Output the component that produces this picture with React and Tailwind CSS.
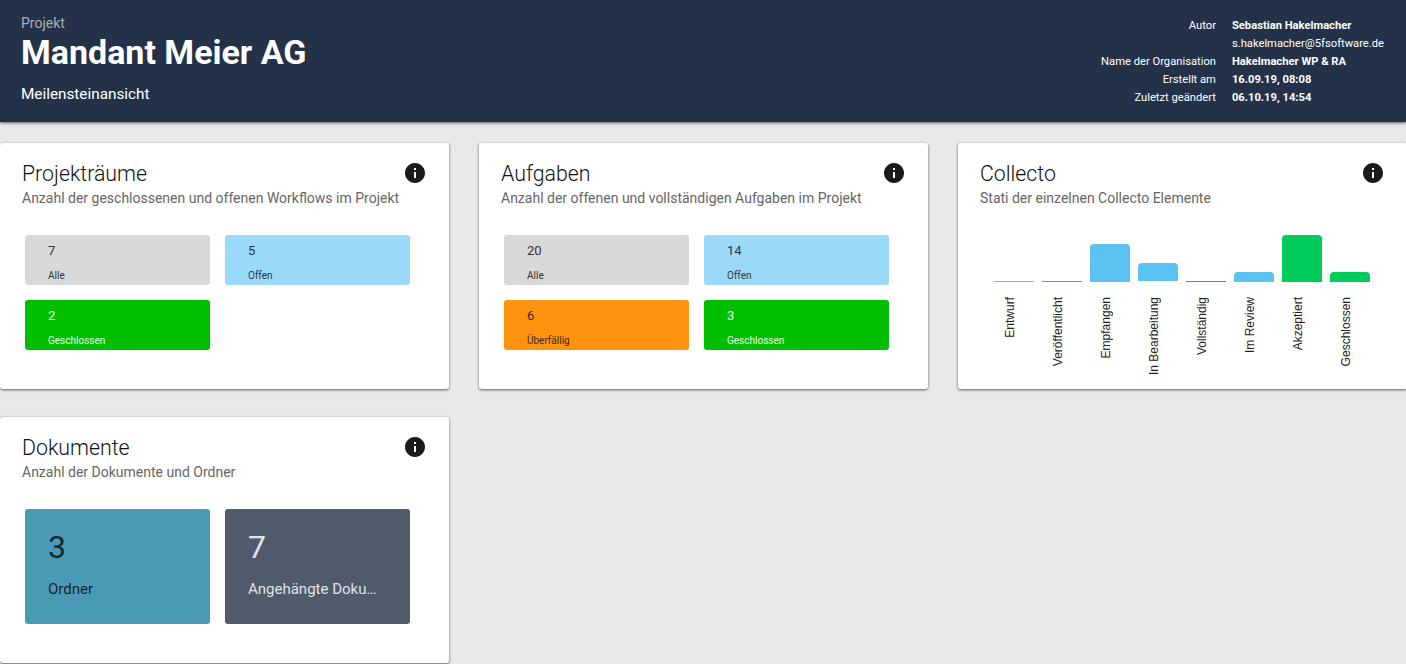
import { MdInfo } from 'react-icons/md'

const meta = [
  ['Autor', 'Sebastian Hakelmacher', true],
  ['', 's.hakelmacher@5fsoftware.de', false],
  ['Name der Organisation', 'Hakelmacher WP & RA', true],
  ['Erstellt am', '16.09.19, 08:08', true],
  ['Zuletzt geändert', '06.10.19, 14:54', true],
]

const chart = [
  { label: 'Entwurf', bar: 'h-[1px] bg-[#5bc2f2]' },
  { label: 'Veröffentlicht', bar: 'h-[1px] bg-[#8c8c8c]' },
  { label: 'Empfangen', bar: 'h-[38px] rounded-t-[4px] bg-[#5bc2f2]' },
  { label: 'In Bearbeitung', bar: 'mb-[1px] h-[18px] rounded-t-[4px] bg-[#5bc2f2]' },
  { label: 'Vollständig', bar: 'h-[1px] bg-[#1aa9b0]' },
  { label: 'Im Review', bar: 'h-[10px] rounded-t-[4px] bg-[#5bc2f2]' },
  { label: 'Akzeptiert', bar: 'h-[47px] rounded-t-[4px] bg-[#00cc5c]' },
  { label: 'Geschlossen', bar: 'h-[10px] rounded-t-[4px] bg-[#00cc5c]' },
]

function Card({ title, sub, children }) {
  return (
    <div className="relative h-[246px] rounded-[3px] bg-white pl-[22px] pt-[18px] shadow-[0_1px_3px_rgba(0,0,0,0.6)]">
      <MdInfo className="absolute left-[403px] top-[18px] text-[#1a1a1a]" size={24} />
      <h2 className="text-[21.3px] font-light leading-[26px] text-[#111]">{title}</h2>
      <p className="mt-[1px] text-[14px] leading-[20px] text-[#666]">{sub}</p>
      {children}
    </div>
  )
}

function Tile({ value, label, bg, text }) {
  return (
    <div className={`h-[50px] rounded-[3px] pl-[23px] pt-[7px] ${bg} ${text}`}>
      <div className="text-[13px] leading-[17px]">{value}</div>
      <div className="mt-[9px] text-[10px] leading-[15px]">{label}</div>
    </div>
  )
}

function BigTile({ value, label, bg, text }) {
  return (
    <div className={`h-[115px] rounded-[3px] pl-[23px] pr-[31px] pt-[18px] ${bg} ${text}`}>
      <div className="text-[32px] leading-[40px]">{value}</div>
      <div className="mt-[12px] truncate text-[15px] leading-[20px]">{label}</div>
    </div>
  )
}

export default function App() {
  return (
    <div className="h-[664px] w-[1406px] overflow-hidden bg-[#e8e9eb] font-['Roboto',sans-serif]">
      <header className="flex h-[122px] justify-between bg-[#243249] pl-[21px] pr-[22px] shadow-[0_1px_3px_rgba(0,0,0,0.6)]">
        <div className="pt-[14px]">
          <div className="text-[14px] leading-[18px] text-[#a9afb9]">Projekt</div>
          <h1 className="mt-[2px] text-[34px] font-bold leading-[37px] text-white">Mandant Meier AG</h1>
          <div className="mt-[13px] text-[15.3px] leading-[20px] text-white">Meilensteinansicht</div>
        </div>
        <div className="grid grid-cols-[auto_auto] content-start gap-x-[16px] pt-[17px] text-[11.2px] leading-[18px] text-white">
          {meta.map(([key, value, bold]) => (
            <div key={value} className="contents">
              <div className="text-right">{key}</div>
              <div className={bold ? 'font-bold' : ''}>{value}</div>
            </div>
          ))}
        </div>
      </header>

      <main className="grid w-[1407px] grid-cols-[449px_449px_449px] gap-x-[30px] gap-y-[28px] pt-[21px]">
        <Card title="Projekträume" sub="Anzahl der geschlossenen und offenen Workflows im Projekt">
          <div className="ml-[3px] mt-[27px] grid w-[385px] grid-cols-2 gap-[15px]">
            <Tile value="7" label="Alle" bg="bg-[#d8d8d8]" text="text-[#333]" />
            <Tile value="5" label="Offen" bg="bg-[#9ad9f7]" text="text-[#2a3550]" />
            <Tile value="2" label="Geschlossen" bg="bg-[#00bf00]" text="text-[#e4ffe4]" />
          </div>
        </Card>

        <Card title="Aufgaben" sub="Anzahl der offenen und vollständigen Aufgaben im Projekt">
          <div className="ml-[3px] mt-[27px] grid w-[385px] grid-cols-2 gap-[15px]">
            <Tile value="20" label="Alle" bg="bg-[#d8d8d8]" text="text-[#333]" />
            <Tile value="14" label="Offen" bg="bg-[#9ad9f7]" text="text-[#2a3550]" />
            <Tile value="6" label="Überfällig" bg="bg-[#ff9210]" text="text-[#3a2a10]" />
            <Tile value="3" label="Geschlossen" bg="bg-[#00bf00]" text="text-[#e4ffe4]" />
          </div>
        </Card>

        <Card title="Collecto" sub="Stati der einzelnen Collecto Elemente">
          <div className="ml-[14px] mt-[27px] flex gap-[8px]">
            {chart.map((c) => (
              <div key={c.label} className="flex w-[40px] flex-col items-center">
                <div className="flex h-[47px] w-full items-end">
                  <div className={`w-full ${c.bar}`} />
                </div>
                <div className="mr-[9px] mt-[15px] rotate-180 font-['Liberation_Sans',sans-serif] text-[12px] leading-[14px] text-[#222] [writing-mode:vertical-rl]">
                  {c.label}
                </div>
              </div>
            ))}
          </div>
        </Card>

        <Card title="Dokumente" sub="Anzahl der Dokumente und Ordner">
          <div className="ml-[3px] mt-[27px] grid w-[385px] grid-cols-2 gap-[15px]">
            <BigTile value="3" label="Ordner" bg="bg-[#4b9ab5]" text="text-[#14262e]" />
            <BigTile value="7" label="Angehängte Dokumente" bg="bg-[#4f5a6b]" text="text-[#e0e3e8]" />
          </div>
        </Card>
      </main>
    </div>
  )
}
